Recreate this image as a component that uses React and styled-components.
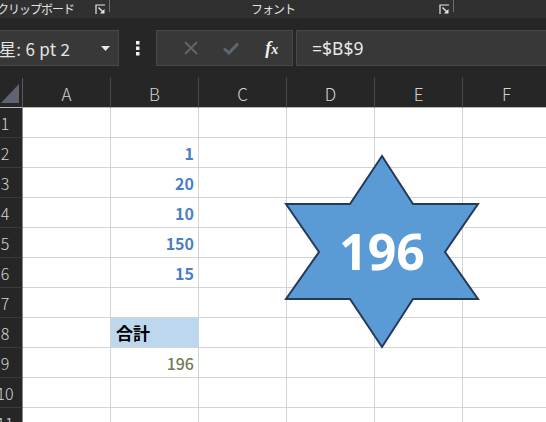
import React from 'react';
import styled, { createGlobalStyle } from 'styled-components';

const GlobalStyle = createGlobalStyle`
  html, body {
    margin: 0;
    padding: 0;
    background: #262626;
    overflow: hidden;
  }
  body {
    font-family: "Noto Sans CJK JP", "Noto Sans", sans-serif;
  }
`;

const Page = styled.div`
  width: 546px;
  height: 422px;
  overflow: hidden;
  display: flex;
  flex-direction: column;
  background: #262626;
`;

const Ribbon = styled.div`
  height: 18px;
  flex: none;
  display: flex;
  background: #303030;
  color: #e2e2e2;
  font-size: 12px;
`;

const RibbonGroup = styled.div`
  width: ${p => p.$width}px;
  flex: none;
  display: flex;
  align-items: center;
  justify-content: space-between;
  padding-right: 4px;
  box-sizing: border-box;
  position: relative;
  overflow: hidden;

  &::after {
    content: '';
    position: absolute;
    right: 0;
    top: 0;
    height: 12px;
    width: 1px;
    background: #6f6f5a;
  }
`;

const RibbonLabel = styled.span`
  margin-left: ${p => p.$offset}px;
  line-height: 18px;
  letter-spacing: -1px;
  white-space: nowrap;
`;

const FormulaRow = styled.div`
  flex: none;
  height: 36px;
  margin-top: 12px;
  display: flex;
  align-items: stretch;
`;

const NameBox = styled.div`
  width: 122px;
  margin-left: -3px;
  box-sizing: border-box;
  border: 1px solid #484848;
  background: #383838;
  display: flex;
  align-items: center;
  justify-content: space-between;
  padding: 0 8px 0 0;
  color: #e4e4e4;
  font-size: 17px;
  white-space: nowrap;
`;

const NameText = styled.span`
  margin-left: 1px;
  letter-spacing: 0.3px;
`;

const Dots = styled.div`
  width: 37px;
  display: flex;
  align-items: center;
  justify-content: center;
`;

const ButtonGroup = styled.div`
  width: 137px;
  box-sizing: border-box;
  border: 1px solid #484848;
  background: #383838;
  display: flex;
  align-items: center;
  padding-left: 14px;
`;

const FxButton = styled.div`
  width: 45px;
  display: flex;
  align-items: center;
  justify-content: center;
  color: #f0f0f0;
  font-family: "Liberation Serif", serif;
  font-style: italic;
  font-weight: 700;
  font-size: 18px;
`;

const FxSub = styled.span`
  font-size: 14px;
  position: relative;
  top: 2px;
`;

const FormulaInput = styled.div`
  flex: 1;
  margin-left: 3px;
  margin-right: -4px;
  box-sizing: border-box;
  border: 1px solid #484848;
  background: #383838;
  display: flex;
  align-items: center;
  padding-left: 15px;
  color: #e8e8e8;
  font-family: "Noto Sans", sans-serif;
  font-size: 17.5px;
`;

const Sheet = styled.div`
  margin-top: 12px;
  position: relative;
  flex: 1;
  display: grid;
  grid-template-columns: 23px repeat(6, 88px);
  grid-auto-rows: 30px;
  align-content: start;
`;

const Corner = styled.div`
  box-sizing: border-box;
  border-right: 1px solid #5a5a5a;
  border-bottom: 1px solid #b8b8b8;
  position: relative;
  overflow: hidden;
`;

const CornerMark = styled.svg`
  position: absolute;
  left: 0;
  top: 0;
`;

const ColHeader = styled.div`
  box-sizing: border-box;
  border-bottom: 1px solid #b8b8b8;
  border-right: 1px solid #4a4a4a;
  display: flex;
  align-items: center;
  justify-content: center;
  color: #d4d4d4;
  font-size: 17px;
  font-weight: 300;
  padding-top: 1px;
`;

const RowHeader = styled.div`
  box-sizing: border-box;
  border-right: 1px solid #8a8a8a;
  border-bottom: 1px solid #3a3a3a;
  display: flex;
  align-items: center;
  justify-content: center;
  padding-right: 12px;
  color: #d4d4d4;
  font-size: 16px;
  font-weight: 300;
  overflow: hidden;
  white-space: nowrap;
`;

const Cell = styled.div`
  box-sizing: border-box;
  background: ${p => (p.$fill ? '#bdd7ee' : '#ffffff')};
  border-right: 1px solid ${p => (p.$fill ? '#bdd7ee' : '#d4d4d4')};
  border-bottom: 1px solid #d4d4d4;
  display: flex;
  align-items: center;
  justify-content: ${p => (p.$align === 'left' ? 'flex-start' : 'flex-end')};
  padding: 0 4px 0 5px;
  font-size: ${p => (p.$align === 'left' ? 17 : 16)}px;
  font-weight: ${p => p.$weight || 400};
  color: ${p => p.$color || '#000'};
`;

const Star = styled.svg`
  position: absolute;
  left: 280px;
  top: 72px;
  width: 205px;
  height: 205px;
  overflow: visible;
`;

const ExpandIcon = () => (
  <svg width="11" height="11" viewBox="0 0 11 11">
    <path d="M1 10 V1 H10" fill="none" stroke="#e6e6e6" strokeWidth="1.2" />
    <path d="M3.5 3.5 L8.5 8.5" stroke="#e6e6e6" strokeWidth="1.4" />
    <path d="M9.5 9.5 L9.5 5 L5 9.5 Z" fill="#e6e6e6" />
  </svg>
);

const columns = ['A', 'B', 'C', 'D', 'E', 'F'];

const blue = '#4a7fc6';
const data = {
  2: { B: { text: '1', color: blue, weight: 700 } },
  3: { B: { text: '20', color: blue, weight: 700 } },
  4: { B: { text: '10', color: blue, weight: 700 } },
  5: { B: { text: '150', color: blue, weight: 700 } },
  6: { B: { text: '15', color: blue, weight: 700 } },
  8: { B: { text: '合計', weight: 700, fill: true, align: 'left' } },
  9: { B: { text: '196', color: '#727b58', weight: 500 } },
};

const rows = [1, 2, 3, 4, 5, 6, 7, 8, 9, 10, 11];

export default function App() {
  return (
    <Page>
      <GlobalStyle />
      <Ribbon>
        <RibbonGroup $width={110}>
          <RibbonLabel $offset={-3}>クリップボード</RibbonLabel>
          <ExpandIcon />
        </RibbonGroup>
        <RibbonGroup $width={344}>
          <RibbonLabel $offset={141}>フォント</RibbonLabel>
          <ExpandIcon />
        </RibbonGroup>
      </Ribbon>

      <FormulaRow>
        <NameBox>
          <NameText>星: 6 pt 2</NameText>
          <svg width="9" height="5" viewBox="0 0 9 5">
            <path d="M0 0 H9 L4.5 5 Z" fill="#e8e8e8" />
          </svg>
        </NameBox>
        <Dots>
          <svg width="4" height="15" viewBox="0 0 4 15">
            <rect x="0" y="0" width="3.5" height="3.5" fill="#f0f0f0" />
            <rect x="0" y="5.5" width="3.5" height="3.5" fill="#f0f0f0" />
            <rect x="0" y="11" width="3.5" height="3.5" fill="#f0f0f0" />
          </svg>
        </Dots>
        <ButtonGroup>
          <FxButton>
            <svg width="14" height="14" viewBox="0 0 14 14">
              <path d="M1 1 L13 13 M13 1 L1 13" stroke="#5d6672" strokeWidth="2" />
            </svg>
          </FxButton>
          <FxButton>
            <svg width="16" height="13" viewBox="0 0 16 13">
              <path d="M1 6.5 L6 11 L15 1.5" fill="none" stroke="#5d6672" strokeWidth="3" />
            </svg>
          </FxButton>
          <FxButton>
            f<FxSub>x</FxSub>
          </FxButton>
        </ButtonGroup>
        <FormulaInput>=$B$9</FormulaInput>
      </FormulaRow>

      <Sheet>
        <Corner>
          <CornerMark width="23" height="29" viewBox="0 0 23 29">
            <path d="M1 25 L19 6 L19 25 Z" fill="#5e6470" />
          </CornerMark>
        </Corner>
        {columns.map(c => (
          <ColHeader key={c}>{c}</ColHeader>
        ))}
        {rows.map(r => (
          <React.Fragment key={r}>
            <RowHeader>{r}</RowHeader>
            {columns.map(c => {
              const cell = data[r] && data[r][c];
              return (
                <Cell
                  key={c}
                  $fill={cell && cell.fill}
                  $align={cell && cell.align}
                  $color={cell && cell.color}
                  $weight={cell && cell.weight}
                >
                  {cell ? cell.text : ''}
                </Cell>
              );
            })}
          </React.Fragment>
        ))}

        <Star viewBox="0 0 205 205">
          <polygon
            points="102,6 133,54 198,54 165,102 198,149 133,149 102,197 70,149 6,149 39,102 6,54 70,54"
            fill="#5b9bd5"
            stroke="#243a58"
            strokeWidth="2"
            strokeLinejoin="miter"
          />
          <text
            x="102"
            y="101"
            textAnchor="middle"
            dominantBaseline="central"
            fill="#ffffff"
            fontFamily="'Noto Sans', sans-serif"
            fontWeight="700"
            fontSize="50"
          >
            196
          </text>
        </Star>
      </Sheet>
    </Page>
  );
}
